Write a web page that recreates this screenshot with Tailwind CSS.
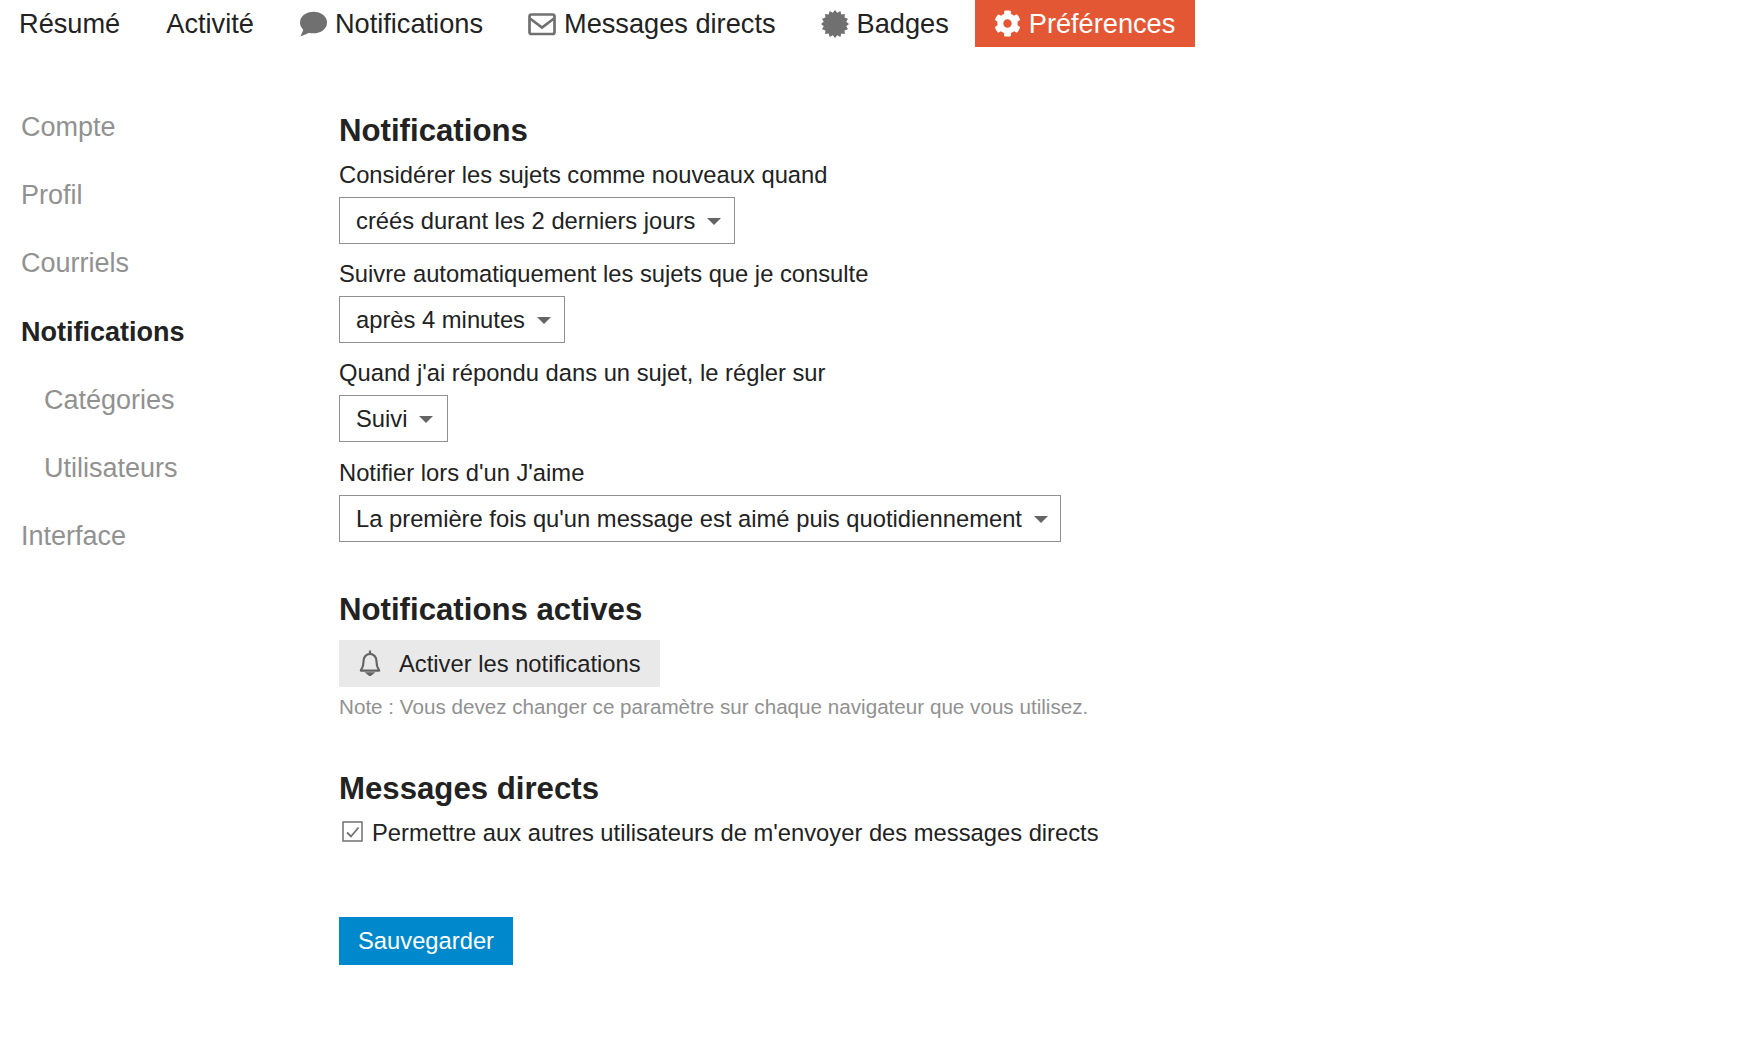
<!DOCTYPE html>
<html lang="fr">
<head>
<meta charset="utf-8">
<script src="https://cdn.jsdelivr.net/npm/@tailwindcss/browser@4"></script>
<title>Préférences</title>
</head>
<body class="bg-white text-[#222222] font-['Liberation_Sans',Arial,sans-serif]">
<nav class="flex items-start h-[47px] text-[27.2px] leading-[47px] pl-[3px]">
  <a class="px-[16px] mr-[14px]">Résumé</a>
  <a class="px-[16px] mr-[14px]">Activité</a>
  <a class="px-[16px] mr-[14px] flex items-center gap-[8px]">
    <svg class="w-[28px] h-[28px] -ml-[1px] fill-[#707070]" viewBox="0 0 28 28"><ellipse cx="14.500" cy="12.500" rx="13.500" ry="10.800"/><path d="M5 18L1.500 26.500 12 22z"/></svg>
    Notifications</a>
  <a class="px-[16px] mr-[13px] flex items-center gap-[8px]">
    <svg class="w-[28px] h-[28px] -ml-[1px] fill-none stroke-[#707070] stroke-[2.7]" viewBox="0 0 28 28"><rect x="1.500" y="4.500" width="25" height="19.500" rx="2"/><path d="M2 8.500l12 9 12-9"/></svg>
    Messages directs</a>
  <a class="px-[16px] mr-[10px] flex items-center gap-[8px]">
    <svg class="w-[28px] h-[28px] fill-[#707070]" viewBox="0 0 28 28"><polygon points="28,14 25.28,16.24 26.94,19.36 23.56,20.39 23.9,23.9 20.39,23.56 19.36,26.94 16.24,25.28 14,28 11.76,25.28 8.64,26.94 7.61,23.56 4.1,23.9 4.44,20.39 1.06,19.36 2.72,16.24 0,14 2.72,11.76 1.06,8.64 4.44,7.61 4.1,4.1 7.61,4.44 8.64,1.06 11.76,2.72 14,0 16.24,2.72 19.36,1.06 20.39,4.44 23.9,4.1 23.56,7.61 26.94,8.64 25.28,11.76"/></svg>
    Badges</a>
  <a class="pl-[19px] pr-[20px] flex items-center gap-[8px] bg-[#e45735] text-white h-[47px]">
    <svg class="w-[27px] h-[27px] fill-white" viewBox="0 0 512 512"><path d="M487.4 315.7l-42.6-24.6c4.3-23.2 4.3-47 0-70.2l42.6-24.6c4.9-2.8 7.1-8.6 5.5-14-11.1-35.6-30-67.8-54.7-94.6-3.8-4.1-10-5.1-14.8-2.3L380.8 110c-17.9-15.4-38.5-27.3-60.8-35.1V25.8c0-5.6-3.9-10.5-9.4-11.7-36.7-8.2-74.3-7.8-109.2 0-5.5 1.2-9.4 6.1-9.4 11.7V75c-22.2 7.9-42.8 19.8-60.8 35.1L88.7 85.5c-4.9-2.8-11-1.9-14.8 2.3-24.7 26.7-43.6 58.9-54.7 94.6-1.7 5.4.6 11.2 5.5 14L67.3 221c-4.3 23.2-4.3 47 0 70.2l-42.6 24.6c-4.9 2.8-7.1 8.6-5.5 14 11.1 35.6 30 67.8 54.7 94.6 3.8 4.1 10 5.1 14.8 2.3l42.6-24.6c17.9 15.4 38.5 27.3 60.8 35.1v49.2c0 5.6 3.9 10.5 9.4 11.7 36.7 8.2 74.3 7.8 109.2 0 5.5-1.2 9.4-6.1 9.4-11.7v-49.2c22.2-7.9 42.8-19.8 60.8-35.1l42.6 24.6c4.9 2.8 11 1.9 14.8-2.3 24.7-26.7 43.6-58.9 54.7-94.6 1.5-5.5-.7-11.3-5.6-14.1zM256 336c-44.1 0-80-35.9-80-80s35.9-80 80-80 80 35.9 80 80-35.9 80-80 80z"/></svg>
    Préférences</a>
</nav>
<div class="flex pt-[46px]">
  <aside class="w-[339px] shrink-0 pl-[21px] text-[27px] leading-[68.2px] text-[#919191]">
    <div>Compte</div>
    <div>Profil</div>
    <div>Courriels</div>
    <div class="font-bold text-[#222222]">Notifications</div>
    <div class="pl-[23px]">Catégories</div>
    <div class="pl-[23px]">Utilisateurs</div>
    <div>Interface</div>
  </aside>
  <main class="flex-1 text-[23.75px] leading-[33px]">
    <h2 class="text-[31.2px] font-bold leading-[36px] mt-[20px] mb-[9px]">Notifications</h2>
    <label class="block">Considérer les sujets comme nouveaux quand</label>
    <div class="mt-[6px] mb-[13.2px] w-fit h-[47px] pl-[16px] pr-[13px] flex items-center border border-[#919191]">créés durant les 2 derniers jours<span class="ml-[12px] mt-[2px] border-x-[7px] border-x-transparent border-t-[7px] border-t-[#646464]"></span></div>
    <label class="block">Suivre automatiquement les sujets que je consulte</label>
    <div class="mt-[6px] mb-[13.2px] w-fit h-[47px] pl-[16px] pr-[13px] flex items-center border border-[#919191]">après 4 minutes<span class="ml-[12px] mt-[2px] border-x-[7px] border-x-transparent border-t-[7px] border-t-[#646464]"></span></div>
    <label class="block">Quand j'ai répondu dans un sujet, le régler sur</label>
    <div class="mt-[6px] mb-[13.2px] w-fit h-[47px] pl-[16px] pr-[14px] flex items-center border border-[#919191]">Suivi<span class="ml-[12px] mt-[2px] border-x-[7px] border-x-transparent border-t-[7px] border-t-[#646464]"></span></div>
    <label class="block">Notifier lors d'un J'aime</label>
    <div class="mt-[6px] w-fit h-[47px] pl-[16px] pr-[12px] flex items-center border border-[#919191]">La première fois qu'un message est aimé puis quotidiennement<span class="ml-[12px] mt-[2px] border-x-[7px] border-x-transparent border-t-[7px] border-t-[#646464]"></span></div>

    <h2 class="text-[31.2px] font-bold leading-[36px] mt-[50px] mb-[12px]">Notifications actives</h2>
    <button class="flex items-center h-[47px] pl-[18px] pr-[19px] bg-[#e9e9e9] gap-[16px]">
      <svg class="w-[26px] h-[26px] fill-none stroke-[#646464] stroke-[2]" viewBox="0 0 24 24"><path d="M12 .5v3"/><path d="M3.500 19c0-.8 2.500-2.500 2.500-8.500 0-4 2.500-7 6-7s6 3 6 7c0 6 2.500 7.700 2.500 8.500z" stroke-linejoin="round"/><path d="M9.800 21.500h4.400l-2.200 1.800z" class="fill-[#646464]"/></svg>
      Activer les notifications</button>
    <p class="text-[20.65px] leading-[28px] text-[#919191] mt-[6px]">Note : Vous devez changer ce paramètre sur chaque navigateur que vous utilisez.</p>

    <h2 class="text-[31.2px] font-bold leading-[36px] mt-[50px] mb-[9px]">Messages directs</h2>
    <label class="flex items-center gap-[8px]">
      <svg class="w-[22px] h-[22px] ml-[3px] shrink-0" viewBox="0 0 22 22"><rect x="1" y="1" width="19" height="19" fill="#fff" stroke="#707070" stroke-width="1.500"/><path d="M5 11.500l4 4 7.500-9" fill="none" stroke="#707070" stroke-width="1.800"/></svg>
      Permettre aux autres utilisateurs de m'envoyer des messages directs</label>

    <button class="block mt-[68px] h-[48px] px-[19px] bg-[#0088cc] text-white">Sauvegarder</button>
  </main>
</div>
</body>
</html>
